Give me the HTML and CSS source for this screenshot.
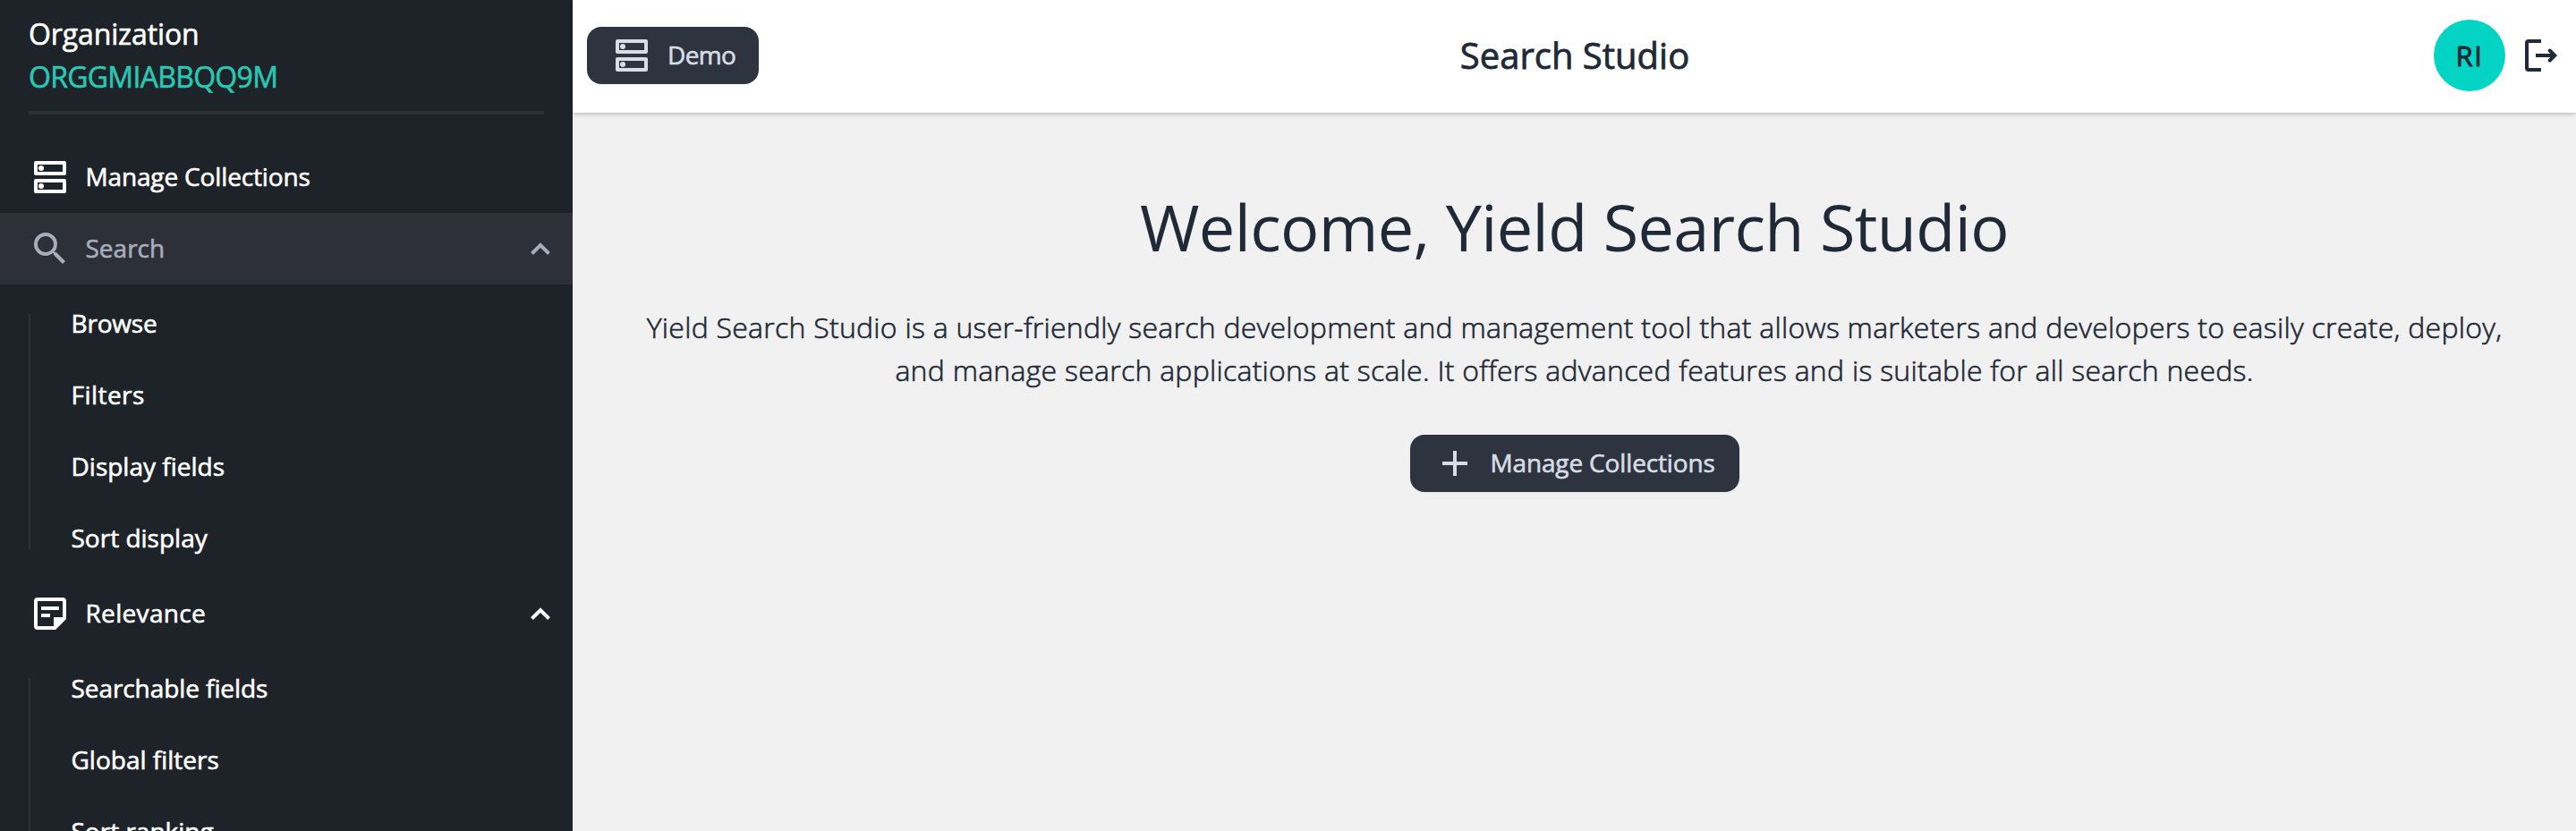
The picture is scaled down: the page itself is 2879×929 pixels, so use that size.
FILE: index.html
```html
<!DOCTYPE html>
<html lang="en">
<head>
<meta charset="utf-8">
<title>Search Studio</title>
<link rel="stylesheet" href="styles.css">
</head>
<body>
<svg class="defs" aria-hidden="true">
  <symbol id="storage" viewBox="0 0 48 48"><path fill="currentColor" fill-rule="evenodd" d="M8 6H40Q42 6 42 8V20Q42 22 40 22H8Q6 22 6 20V8Q6 6 8 6ZM10 10V18H38V10ZM8 26H40Q42 26 42 28V40Q42 42 40 42H8Q6 42 6 40V28Q6 26 8 26ZM10 30V38H38V30Z"/><circle cx="14" cy="14" r="3" fill="currentColor"/><circle cx="14" cy="34" r="3" fill="currentColor"/></symbol>
  <symbol id="search" viewBox="0 0 24 24"><path fill="currentColor" d="M15.5 14h-.79l-.28-.27A6.47 6.47 0 0 0 16 9.500 6.500 6.500 0 1 0 9.500 16c1.610 0 3.090-.590 4.230-1.570l.270.280v.790l5 4.990L20.490 19zm-6 0C7.010 14 5 11.990 5 9.500S7.010 5 9.500 5 14 7.010 14 9.500 11.990 14 9.500 14"/></symbol>
  <symbol id="note" viewBox="0 0 48 48"><path fill="currentColor" fill-rule="evenodd" d="M10 6H38Q42 6 42 10V30L30 42H10Q6 42 6 38V10Q6 6 10 6ZM10 10V38H28V28H38V10Z"/><path fill="currentColor" d="M14 16H34V20H14ZM14 24H24V28H14Z"/></symbol>
  <symbol id="chevron" viewBox="0 0 48 48"><path fill="none" stroke="currentColor" stroke-width="4" d="M14.500 29.500L24 20L33.500 29.500"/></symbol>
</svg>
<div class="app">
  <aside class="sidebar">
    <div class="org">
      <div class="org-label">Organization</div>
      <div class="org-code">ORGGMIABBQQ9M</div>
    </div>
    <nav class="nav">
      <a class="nav-item"><svg class="icon"><use href="#storage"/></svg><span class="nav-text t-manage">Manage Collections</span></a>
      <a class="nav-item active"><svg class="icon"><use href="#search"/></svg><span class="nav-text">Search</span><svg class="icon"><use href="#chevron"/></svg></a>
      <div class="sub">
        <a class="sub-item t-browse">Browse</a>
        <a class="sub-item t-filters">Filters</a>
        <a class="sub-item">Display fields</a>
        <a class="sub-item">Sort display</a>
      </div>
      <a class="nav-item"><svg class="icon"><use href="#note"/></svg><span class="nav-text t-relevance">Relevance</span><svg class="icon"><use href="#chevron"/></svg></a>
      <div class="sub">
        <a class="sub-item t-searchable">Searchable fields</a>
        <a class="sub-item">Global filters</a>
        <a class="sub-item">Sort ranking</a>
      </div>
    </nav>
  </aside>
  <div class="content">
    <header class="header">
      <div class="side"><button class="btn btn-demo"><svg class="icon"><use href="#storage"/></svg><span class="btn-text">Demo</span></button></div>
      <div class="title">Search Studio</div>
      <div class="side right">
        <div class="avatar"><span>RI</span></div>
        <svg class="icon logout" viewBox="0 0 48 48"><path fill="none" stroke="currentColor" stroke-width="4" d="M24 8H10Q8 8 8 10V38Q8 40 10 40H24M18 24H39"/><path fill="none" stroke="currentColor" stroke-width="4" stroke-linecap="round" d="M33.700 18.500L39.200 24L33.700 29.500"/></svg>
      </div>
    </header>
    <main class="main">
      <h1 class="welcome">Welcome, Yield Search Studio</h1>
      <p class="intro">Yield Search Studio is a user-friendly search development and management tool that allows marketers and developers to easily create, deploy,<br>and manage search applications at scale. It offers advanced features and is suitable for all search needs.</p>
      <button class="btn btn-manage"><svg class="icon" viewBox="0 0 48 48"><path fill="currentColor" d="M22 10H26V22H38V26H26V38H22V26H10V22H22Z"/></svg><span class="btn-text">Manage Collections</span></button>
    </main>
  </div>
</div>
</body>
</html>
```
FILE: styles.css
```css
* { box-sizing: border-box; }
body {
  margin: 0;
  font-family: "Open Sans", "Noto Sans", sans-serif;
  font-weight: 400;
  -webkit-text-stroke-width: .6px;
  color: #1f2937;
  background: #f1f1f1;
}
.defs { display: none; }
.app { display: flex; height: 929px; overflow: hidden; }
.icon { display: block; width: 48px; height: 48px; flex: none; }

.sidebar { width: 640px; flex: none; background: #1e2229; color: #fff; overflow: hidden; }
.org {
  margin: 0 32px 30px;
  padding: 14px 0;
  border-bottom: 4px solid #2d3038;
  font-size: 32px;
  line-height: 48px;
}
.org-label { letter-spacing: -.12px; }
.org-code { color: #2ac8b4; letter-spacing: -.7px; }
.nav-item { display: flex; align-items: center; height: 80px; padding: 0 12px 0 32px; font-size: 28px; }
.nav-text { flex: 1; margin-left: 15.500px; padding-bottom: 2px; }
.active { background: #2d3038; color: #a6adbb; }
.sub { position: relative; padding: 4px 0 4px 79.500px; }
.sub::before {
  content: "";
  position: absolute;
  left: 32px;
  top: 32px;
  bottom: 32px;
  width: 2px;
  background: #2d3038;
}
.sub-item { display: block; height: 80px; line-height: 78px; font-size: 28px; }

.content { flex: 1; display: flex; flex-direction: column; min-width: 0; }
.header {
  display: flex;
  align-items: center;
  height: 126px;
  padding: 0 15px 2px 16px;
  background: #fff;
  box-shadow: 0 2px 6px rgba(0, 0, 0, .16), 0 1px 3px rgba(0, 0, 0, .08);
}
.side { flex: 1; display: flex; align-items: center; }
.right { justify-content: flex-end; }
.title { font-size: 40px; line-height: 56px; -webkit-text-stroke-width: .8px; }
.avatar {
  display: flex;
  align-items: center;
  justify-content: center;
  width: 80px;
  height: 80px;
  border-radius: 50%;
  background: #04d4c4;
  font-size: 31px;
  letter-spacing: 1.5px;
  -webkit-text-stroke-width: 1px;
}
.logout { margin-left: 16px; }
.btn {
  display: flex;
  align-items: center;
  height: 64px;
  padding: 0 26px;
  border: 0;
  border-radius: 16px;
  background: #2e3340;
  color: #d7dde4;
  font: inherit;
  font-size: 28px;
  box-shadow: 0 1px 3px rgba(0, 0, 0, .06);
}
.btn-demo { width: 192px; letter-spacing: -.67px; }
.btn-manage { width: 368px; letter-spacing: -.15px; }
.btn-text { margin-left: 16px; padding-bottom: 2px; white-space: nowrap; }
.main { display: flex; flex-direction: column; align-items: center; padding-top: 87px; }
.welcome { margin: 0; font-size: 72px; font-weight: 400; line-height: 80px; letter-spacing: -.63px; -webkit-text-stroke-width: 0; }
.intro {
  margin: 49px 0 48px;
  font-size: 32px;
  font-weight: 300;
  line-height: 48px;
  letter-spacing: .26px;
  text-align: center;
  white-space: nowrap;
  -webkit-text-stroke-width: .6px;
}

.t-manage { letter-spacing: -.15px; }
.t-browse { letter-spacing: -.18px; }
.t-filters { letter-spacing: .46px; }
.t-relevance { letter-spacing: .33px; }
.t-searchable { letter-spacing: -.08px; }
```
